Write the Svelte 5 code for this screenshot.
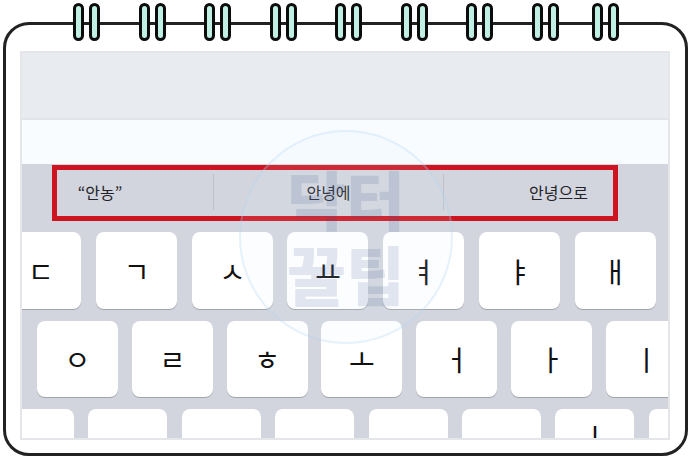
<script>
    const rings = [0, 1, 2, 3, 4, 5, 6, 7, 8];
    const row1 = ["ㄷ", "ㄱ", "ㅅ", "ㅛ", "ㅕ", "ㅑ", "ㅐ"];
    const row2 = ["ㅇ", "ㄹ", "ㅎ", "ㅗ", "ㅓ", "ㅏ", "ㅣ"];
    const row3 = ["", "", "", "", "", "", "ㅣ", ""];
</script>

<div class="frame">
    <div class="rings">
        {#each rings as r}
            <div class="pair">
                <span class="ring"></span>
                <span class="ring"></span>
            </div>
        {/each}
    </div>

    <div class="screen">
        <div class="top-band"></div>
        <div class="input-band"></div>
        <div class="keyboard">
            <div class="suggestions">
                <div class="cell first">“안농”</div>
                <div class="cell">안녕에</div>
                <div class="cell">안녕으로</div>
            </div>
            <div class="row row1">
                {#each row1 as k}
                    <div class="key">{k}</div>
                {/each}
            </div>
            <div class="row row2">
                {#each row2 as k}
                    <div class="key">{k}</div>
                {/each}
            </div>
            <div class="row row3">
                {#each row3 as k}
                    <div class="key">{k}</div>
                {/each}
            </div>
        </div>
    </div>

    <!-- red highlight over the suggestion bar -->
    <div class="highlight"></div>

    <!-- watermark -->
    <div class="stamp">
        <span>닥터</span>
        <span>꿀팁</span>
    </div>
</div>

<style>
    :global(body) {
        background: #fff;
    }

    .frame {
        position: relative;
        box-sizing: border-box;
        width: 685px;
        height: 434px;
        margin: 22px 0 0 3px;
        padding: 26px 15px 14px 14px;
        border: 3px solid #222;
        border-radius: 26px;
        font-family: "Noto Sans CJK KR", sans-serif;
    }

    .rings {
        position: absolute;
        top: -22px;
        left: 67px;
        display: flex;
        gap: 38.5px;
    }

    .pair {
        display: flex;
        gap: 5px;
    }

    .pair:last-child {
        margin-left: -5.5px;
    }

    .ring {
        box-sizing: border-box;
        width: 11px;
        height: 38px;
        background: #c0efe4;
        border: 3px solid #0c0c0c;
        border-radius: 6px;
    }

    .screen {
        box-sizing: border-box;
        height: 389px;
        border: 2px solid #e4e6ea;
        overflow: hidden;
        display: flex;
        flex-direction: column;
    }

    .top-band {
        flex: 0 0 67px;
        box-sizing: border-box;
        background: #e8ebf0;
        border-bottom: 2px solid #e2e4e9;
    }

    .input-band {
        flex: 0 0 44px;
        background: #f8fcff;
    }

    .keyboard {
        flex: 1;
        background: #d2d5dd;
    }

    .suggestions {
        display: flex;
        height: 68px;
        margin-left: -39px;
        width: 690px;
    }

    .cell {
        flex: 0 0 230px;
        box-sizing: border-box;
        height: 36px;
        margin-top: 10px;
        line-height: 36px;
        text-align: center;
        font-size: 16px;
        color: #232327;
        border-left: 1px solid #bdc0c9;
    }

    .cell.first {
        border-left: none;
        padding-left: 4px;
    }

    .row {
        display: flex;
        gap: 14.7px;
        margin-bottom: 12px;
        width: 800px;
    }

    .row1 {
        margin-left: -21.6px;
    }

    .row2 {
        margin-left: 15px;
        gap: 13.8px;
    }

    .row3 {
        margin-left: -27px;
        gap: 14.4px;
    }

    .key {
        flex: 0 0 81px;
        height: 77px;
        box-sizing: border-box;
        background: #fff;
        border-radius: 8px;
        box-shadow: 0 1px 0 #a3a4a8;
        display: flex;
        align-items: center;
        justify-content: center;
        font-size: 28px;
        color: #111;
    }

    .row2 .key {
        height: 76px;
    }

    .row3 .key {
        flex-basis: 79px;
        height: 80px;
        align-items: flex-start;
        line-height: 40px;
        padding-top: 8px;
    }

    .highlight {
        position: absolute;
        left: 46px;
        top: 140px;
        width: 566px;
        height: 56px;
        box-sizing: border-box;
        border: 5px solid #cc1520;
    }

    .stamp {
        position: absolute;
        left: 233px;
        top: 105px;
        width: 214px;
        height: 214px;
        box-sizing: border-box;
        border: 2px solid rgba(170, 210, 240, 0.28);
        border-radius: 50%;
        background: rgba(225, 240, 255, 0.1);
        display: flex;
        flex-direction: column;
        align-items: center;
        justify-content: center;
        font-weight: 900;
        font-size: 64px;
        line-height: 75px;
        color: rgba(40, 70, 130, 0.13);
    }

    .stamp span {
        position: relative;
        top: -2px;
    }
</style>
